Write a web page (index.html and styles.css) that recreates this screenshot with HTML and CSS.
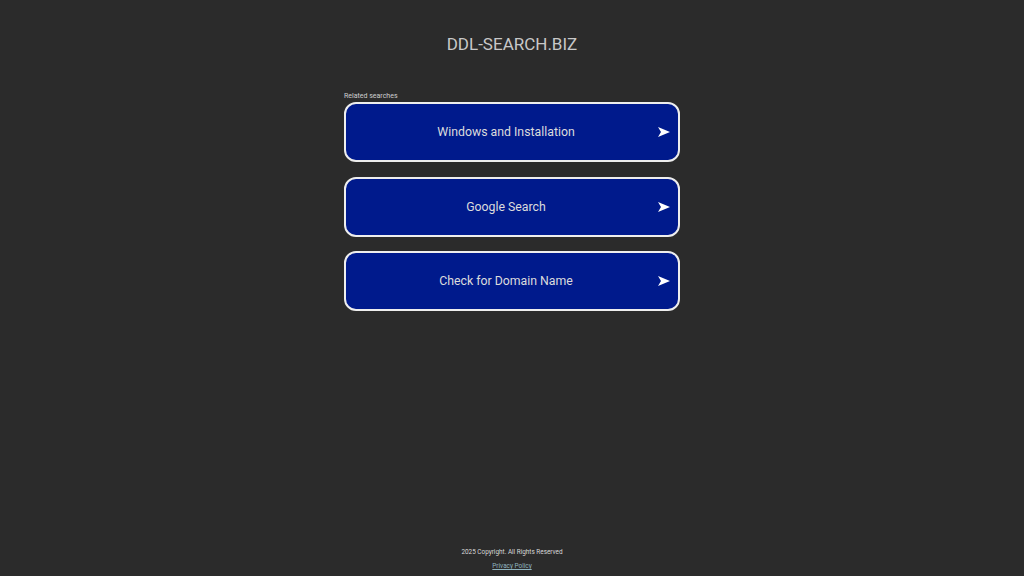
FILE: index.html
```html
<!DOCTYPE html>
<html lang="en">
<head>
<meta charset="utf-8">
<title>ddl-search.biz</title>
<link rel="stylesheet" href="styles.css">
</head>
<body>
<div class="page">
  <header class="header">
    <h1 class="domain">DDL-SEARCH.BIZ</h1>
  </header>
  <main class="main">
    <div class="related">
      <div class="related-title">Related searches</div>
      <a class="link" href="#"><span class="link-text">Windows and Installation</span><svg class="arrow" viewBox="0 0 12 10" width="12" height="10"><path d="M0 0 L12 5 L0 10 L3 5 Z"/></svg></a>
      <a class="link" href="#"><span class="link-text">Google Search</span><svg class="arrow" viewBox="0 0 12 10" width="12" height="10"><path d="M0 0 L12 5 L0 10 L3 5 Z"/></svg></a>
      <a class="link" href="#"><span class="link-text">Check for Domain Name</span><svg class="arrow" viewBox="0 0 12 10" width="12" height="10"><path d="M0 0 L12 5 L0 10 L3 5 Z"/></svg></a>
    </div>
  </main>
  <footer class="footer">
    <div class="copyright">2025 Copyright. All Rights Reserved</div>
    <a class="privacy" href="#">Privacy Policy</a>
  </footer>
</div>
</body>
</html>
```
FILE: styles.css
```css
html, body {
  margin: 0;
  padding: 0;
  background: #2b2b2b;
  font-family: Roboto, "Liberation Sans", Arial, sans-serif;
}
.page {
  min-height: 576px;
  height: 100vh;
  display: flex;
  flex-direction: column;
  align-items: center;
  box-sizing: border-box;
}
.header {
  padding-top: 34px;
  height: 58px;
  box-sizing: border-box;
}
.domain {
  margin: 0;
  font-size: 17px;
  line-height: 20px;
  font-weight: 400;
  color: #c8c8c8;
}
.main {
  flex: 1;
  width: 336px;
}
.related {
  padding-top: 33px;
  display: flex;
  flex-direction: column;
}
.related-title {
  font-size: 7px;
  line-height: 10px;
  color: #cfcfcf;
  margin-bottom: 1px;
}
.link {
  position: relative;
  display: flex;
  align-items: center;
  justify-content: center;
  height: 60px;
  box-sizing: border-box;
  border: 2px solid #eeeeee;
  border-radius: 12px;
  background: #001a8c;
  color: #dcdcdc;
  text-decoration: none;
  font-size: 12.3px;
  padding-right: 12px;
  margin-bottom: 14.5px;
}
.link-text {
  display: block;
}
.arrow {
  position: absolute;
  right: 8px;
  top: 50%;
  transform: translateY(-50%);
  fill: #ffffff;
}
.footer {
  display: flex;
  flex-direction: column;
  align-items: center;
  padding-bottom: 5px;
}
.copyright {
  font-size: 6.4px;
  line-height: 9px;
  color: #d8d8d8;
  margin-bottom: 5px;
}
.privacy {
  font-size: 6.4px;
  line-height: 9px;
  color: #8fb4bf;
  text-decoration: underline;
}
```
